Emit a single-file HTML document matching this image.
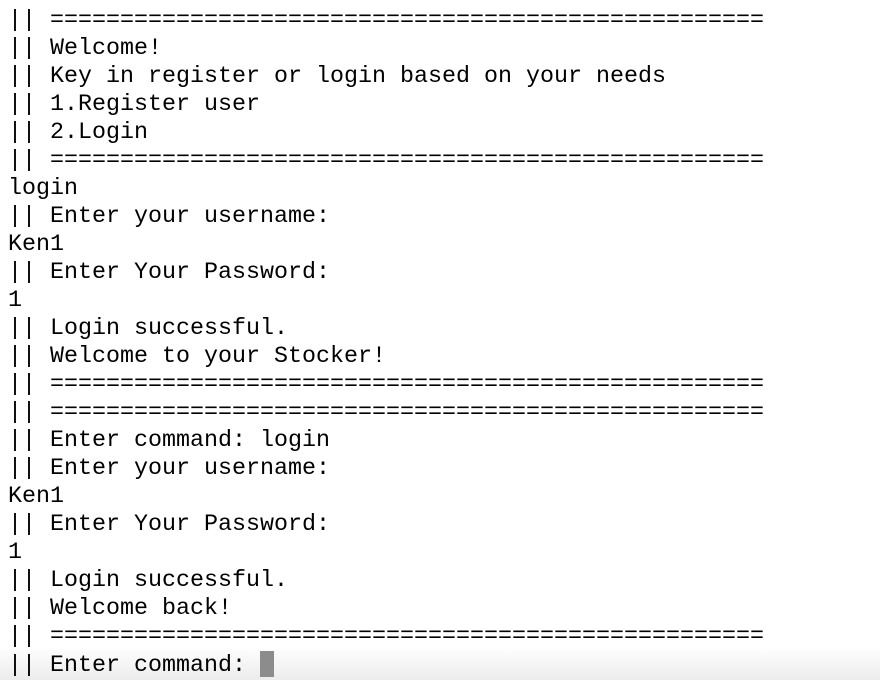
<!DOCTYPE html>
<html><head><meta charset="utf-8"><style>
html,body{margin:0;padding:0;background:#fff;}
body{width:880px;height:680px;overflow:hidden;position:relative;}
pre{position:absolute;left:8px;top:7px;margin:0;font-family:"Liberation Mono",monospace;font-size:23.33px;line-height:28px;color:#000;}
.bot{position:absolute;left:0;right:0;bottom:0;height:34px;background:linear-gradient(#fff,#ececec);}
.cur{display:inline-block;width:14px;height:26px;background:#8c8c8c;vertical-align:-6px;}
</style></head><body>
<div class="bot"></div>
<pre>|| ===================================================
|| Welcome!
|| Key in register or login based on your needs
|| 1.Register user
|| 2.Login
|| ===================================================
login
|| Enter your username:
Ken1
|| Enter Your Password:
1
|| Login successful.
|| Welcome to your Stocker!
|| ===================================================
|| ===================================================
|| Enter command: login
|| Enter your username:
Ken1
|| Enter Your Password:
1
|| Login successful.
|| Welcome back!
|| ===================================================
|| Enter command: <span class="cur"></span></pre>
</body></html>
